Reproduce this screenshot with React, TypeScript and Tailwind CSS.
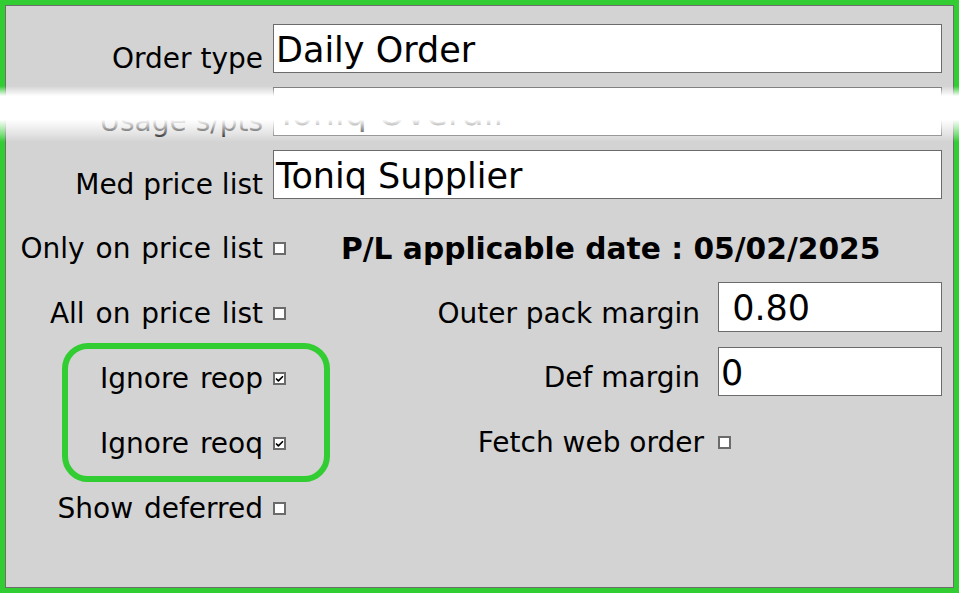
import { Check } from 'lucide-react';

const topRows = [
  { label: 'Order type', value: 'Daily Order' },
  { label: 'Usage s/pts', value: 'Toniq Overall' },
  { label: 'Med price list', value: 'Toniq Supplier' },
];

const flags = [
  { label: 'Only on price list', checked: false },
  { label: 'All on price list', checked: false },
  { label: 'Ignore reop', checked: true },
  { label: 'Ignore reoq', checked: true },
  { label: 'Show deferred', checked: false },
];

function Box({ checked }: { checked: boolean }) {
  return (
    <span className="w-[13px] h-[13px] shrink-0 border-2 border-[#6b6b6b] bg-white flex items-center justify-center">
      {checked && <Check className="w-[10px] h-[10px] text-black" strokeWidth={4.5} />}
    </span>
  );
}

function Field({ value }: { value: string }) {
  return (
    <div className="h-[49px] border border-[#6b6b6b] bg-white flex items-center pl-[2px] pt-[3px] text-[35px] leading-none whitespace-pre">
      {value}
    </div>
  );
}

export default function App() {
  return (
    <div className="relative w-[959px] h-[593px] border-[5px] border-[#32cd32] font-['DejaVu_Sans','Verdana',sans-serif] text-black">
      <div className="h-full border border-[#6e6e6e] bg-[#d3d3d3] pt-[18px] pr-[11px]">
        <div className="grid grid-cols-[257px_1fr] gap-x-[10px] gap-y-[14px]">
          {topRows.map((row) => (
            <div key={row.label} className="contents">
              <div className="flex items-end justify-end text-[28px] leading-[28px]">{row.label}</div>
              <Field value={row.value} />
            </div>
          ))}
        </div>

        <div className="mt-[17px] flex">
          <div className="flex flex-col">
            {flags.map((f) => (
              <div key={f.label} className="h-[65px] flex items-center">
                <span className="w-[257px] text-right text-[28px] leading-[28px] [word-spacing:2px]">{f.label}</span>
                <span className="ml-[10px]">
                  <Box checked={f.checked} />
                </span>
              </div>
            ))}
          </div>

          <div className="flex-1 flex flex-col">
            <div className="h-[65px] flex items-center pl-[55px] font-bold text-[29.7px] leading-[30px]">
              P/L applicable date : 05/02/2025
            </div>
            <div className="mt-[1px] grid grid-cols-[414px_1fr] gap-x-[18px] gap-y-[15px]">
              <div className="flex items-end justify-end pb-[4px] text-[28px] leading-[28px]">Outer pack margin</div>
              <div className="h-[50px] border border-[#6b6b6b] bg-white flex items-center pl-[2px] pt-[3px] text-[35px] leading-none whitespace-pre">
                {' 0.80'}
              </div>
              <div className="flex items-end justify-end pb-[4px] text-[28px] leading-[28px]">Def margin</div>
              <Field value="0" />
            </div>
            <div className="mt-[14px] h-[65px] flex items-center">
              <span className="w-[418px] text-right text-[28px] leading-[28px]">Fetch web order</span>
              <span className="ml-[14px]">
                <Box checked={false} />
              </span>
            </div>
          </div>
        </div>
      </div>

      {/* smeared row */}
      <div className="pointer-events-none absolute -left-[5px] -right-[5px] top-[81px] h-[56px] bg-[linear-gradient(to_bottom,rgba(255,255,255,0)_0%,rgba(255,255,255,1)_18%,rgba(255,255,255,1)_60%,rgba(255,255,255,0.4)_85%,rgba(255,255,255,0)_100%)]" />

      {/* highlight */}
      <div className="pointer-events-none absolute left-[57px] top-[338px] w-[268px] h-[139px] border-[6px] border-[#32cd32] rounded-[26px]" />
    </div>
  );
}
